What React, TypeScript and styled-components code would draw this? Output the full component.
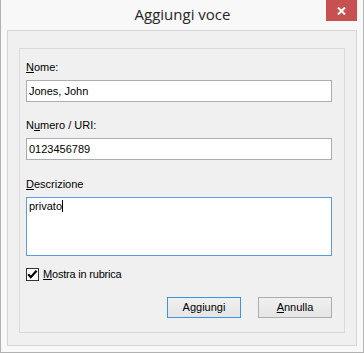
import React from "react";
import styled, { createGlobalStyle } from "styled-components";

const Global = createGlobalStyle`
  html, body { margin: 0; padding: 0; background: #ffffff; }
  body { font-family: "Liberation Sans", Arial, sans-serif; }
`;

const Window = styled.div`
  box-sizing: border-box;
  width: 364px;
  height: 353px;
  background: #f8f8f8;
  border: 1px solid #b1b1b1;
  border-top: 0;
  display: flex;
  flex-direction: column;
`;

const TitleBar = styled.div`
  height: 30px;
  display: grid;
  grid-template-columns: 1fr auto 1fr;
  align-items: start;
`;

const Title = styled.div`
  grid-column: 2;
  padding-top: 4px;
  font-family: "Open Sans", "Noto Sans", sans-serif;
  font-size: 15px;
  line-height: 20px;
  color: #262626;
  margin-left: 1px;
`;

const CloseButton = styled.div`
  grid-column: 3;
  justify-self: end;
  width: 31px;
  height: 21px;
  margin-right: 6px;
  background: #c75050;
  display: flex;
  align-items: center;
  justify-content: center;
`;

const Frame = styled.div`
  flex: 1;
  margin: 0 6px 6px 6px;
  border: 1px solid #d6d6d6;
  background: #f0f0f0;
  padding: 17px 11px 12px 11px;
  display: flex;
`;

const GroupBox = styled.div`
  flex: 1;
  border: 1px solid #dadada;
  padding: 12px 12px 14px 6px;
  display: flex;
  flex-direction: column;
  font-size: 11px;
  line-height: 13px;
  color: #000;
`;

const Field = styled.div<{ $gap: number }>`
  display: flex;
  flex-direction: column;
  gap: 6px;
  margin-top: ${(p) => p.$gap}px;
`;

const Label = styled.div`
  height: 13px;
`;

const Key = styled.span`
  text-decoration: underline;
  text-underline-offset: 1px;
`;

const TextBox = styled.div<{ $focused?: boolean; $multi?: boolean }>`
  box-sizing: border-box;
  width: 306px;
  height: ${(p) => (p.$multi ? "59px" : "22px")};
  background: #ffffff;
  border: 1px solid ${(p) => (p.$focused ? "#5a9be2" : "#abadb3")};
  padding: ${(p) => (p.$multi ? "2px 2px" : "0 2px")};
  display: flex;
  align-items: ${(p) => (p.$multi ? "flex-start" : "center")};
  white-space: pre;
`;

const Caret = styled.span`
  display: inline-block;
  width: 1px;
  height: 12px;
  background: #000;
  vertical-align: top;
`;

const CheckRow = styled.div`
  display: flex;
  align-items: center;
  gap: 4px;
  margin-top: 12px;
`;

const CheckText = styled.span`
  letter-spacing: -0.2px;
`;

const CheckBox = styled.div`
  box-sizing: border-box;
  width: 13px;
  height: 13px;
  border: 1px solid #333333;
  background: #ffffff;
  display: flex;
  align-items: center;
  justify-content: center;
`;

const ButtonRow = styled.div`
  margin-top: auto;
  display: flex;
  justify-content: flex-end;
  gap: 17px;
`;

const Button = styled.div<{ $default?: boolean }>`
  box-sizing: border-box;
  width: 74px;
  height: 21px;
  border: 1px solid ${(p) => (p.$default ? "#3c93e8" : "#adadad")};
  background: linear-gradient(#f0f0f0, #e5e5e5);
  display: flex;
  align-items: center;
  justify-content: center;
  font-size: 11px;
`;

export default function App() {
  return (
    <>
      <Global />
      <Window>
        <TitleBar>
          <Title>Aggiungi voce</Title>
          <CloseButton>
            <svg width="9" height="8" viewBox="0 0 9 8">
              <path d="M1 0.5 L8 7.5 M8 0.5 L1 7.5" stroke="#ffffff" strokeWidth="2" />
            </svg>
          </CloseButton>
        </TitleBar>
        <Frame>
          <GroupBox>
            <Field $gap={0}>
              <Label>
                <Key>N</Key>ome:
              </Label>
              <TextBox>Jones, John</TextBox>
            </Field>
            <Field $gap={17}>
              <Label>
                N<Key>u</Key>mero / URI:
              </Label>
              <TextBox>0123456789</TextBox>
            </Field>
            <Field $gap={18}>
              <Label>
                <Key>D</Key>escrizione
              </Label>
              <TextBox $focused $multi>
                <span>privato</span>
                <Caret />
              </TextBox>
            </Field>
            <CheckRow>
              <CheckBox>
                <svg width="11" height="11" viewBox="0 0 11 11">
                  <path
                    d="M1.2 5.3 L3.8 8.2 L9.6 1.8"
                    stroke="#000"
                    strokeWidth="2.2"
                    fill="none"
                  />
                </svg>
              </CheckBox>
              <CheckText>
                <Key>M</Key>ostra in rubrica
              </CheckText>
            </CheckRow>
            <ButtonRow>
              <Button $default>Aggiungi</Button>
              <Button>
                <span>
                  <Key>A</Key>nnulla
                </span>
              </Button>
            </ButtonRow>
          </GroupBox>
        </Frame>
      </Window>
    </>
  );
}
